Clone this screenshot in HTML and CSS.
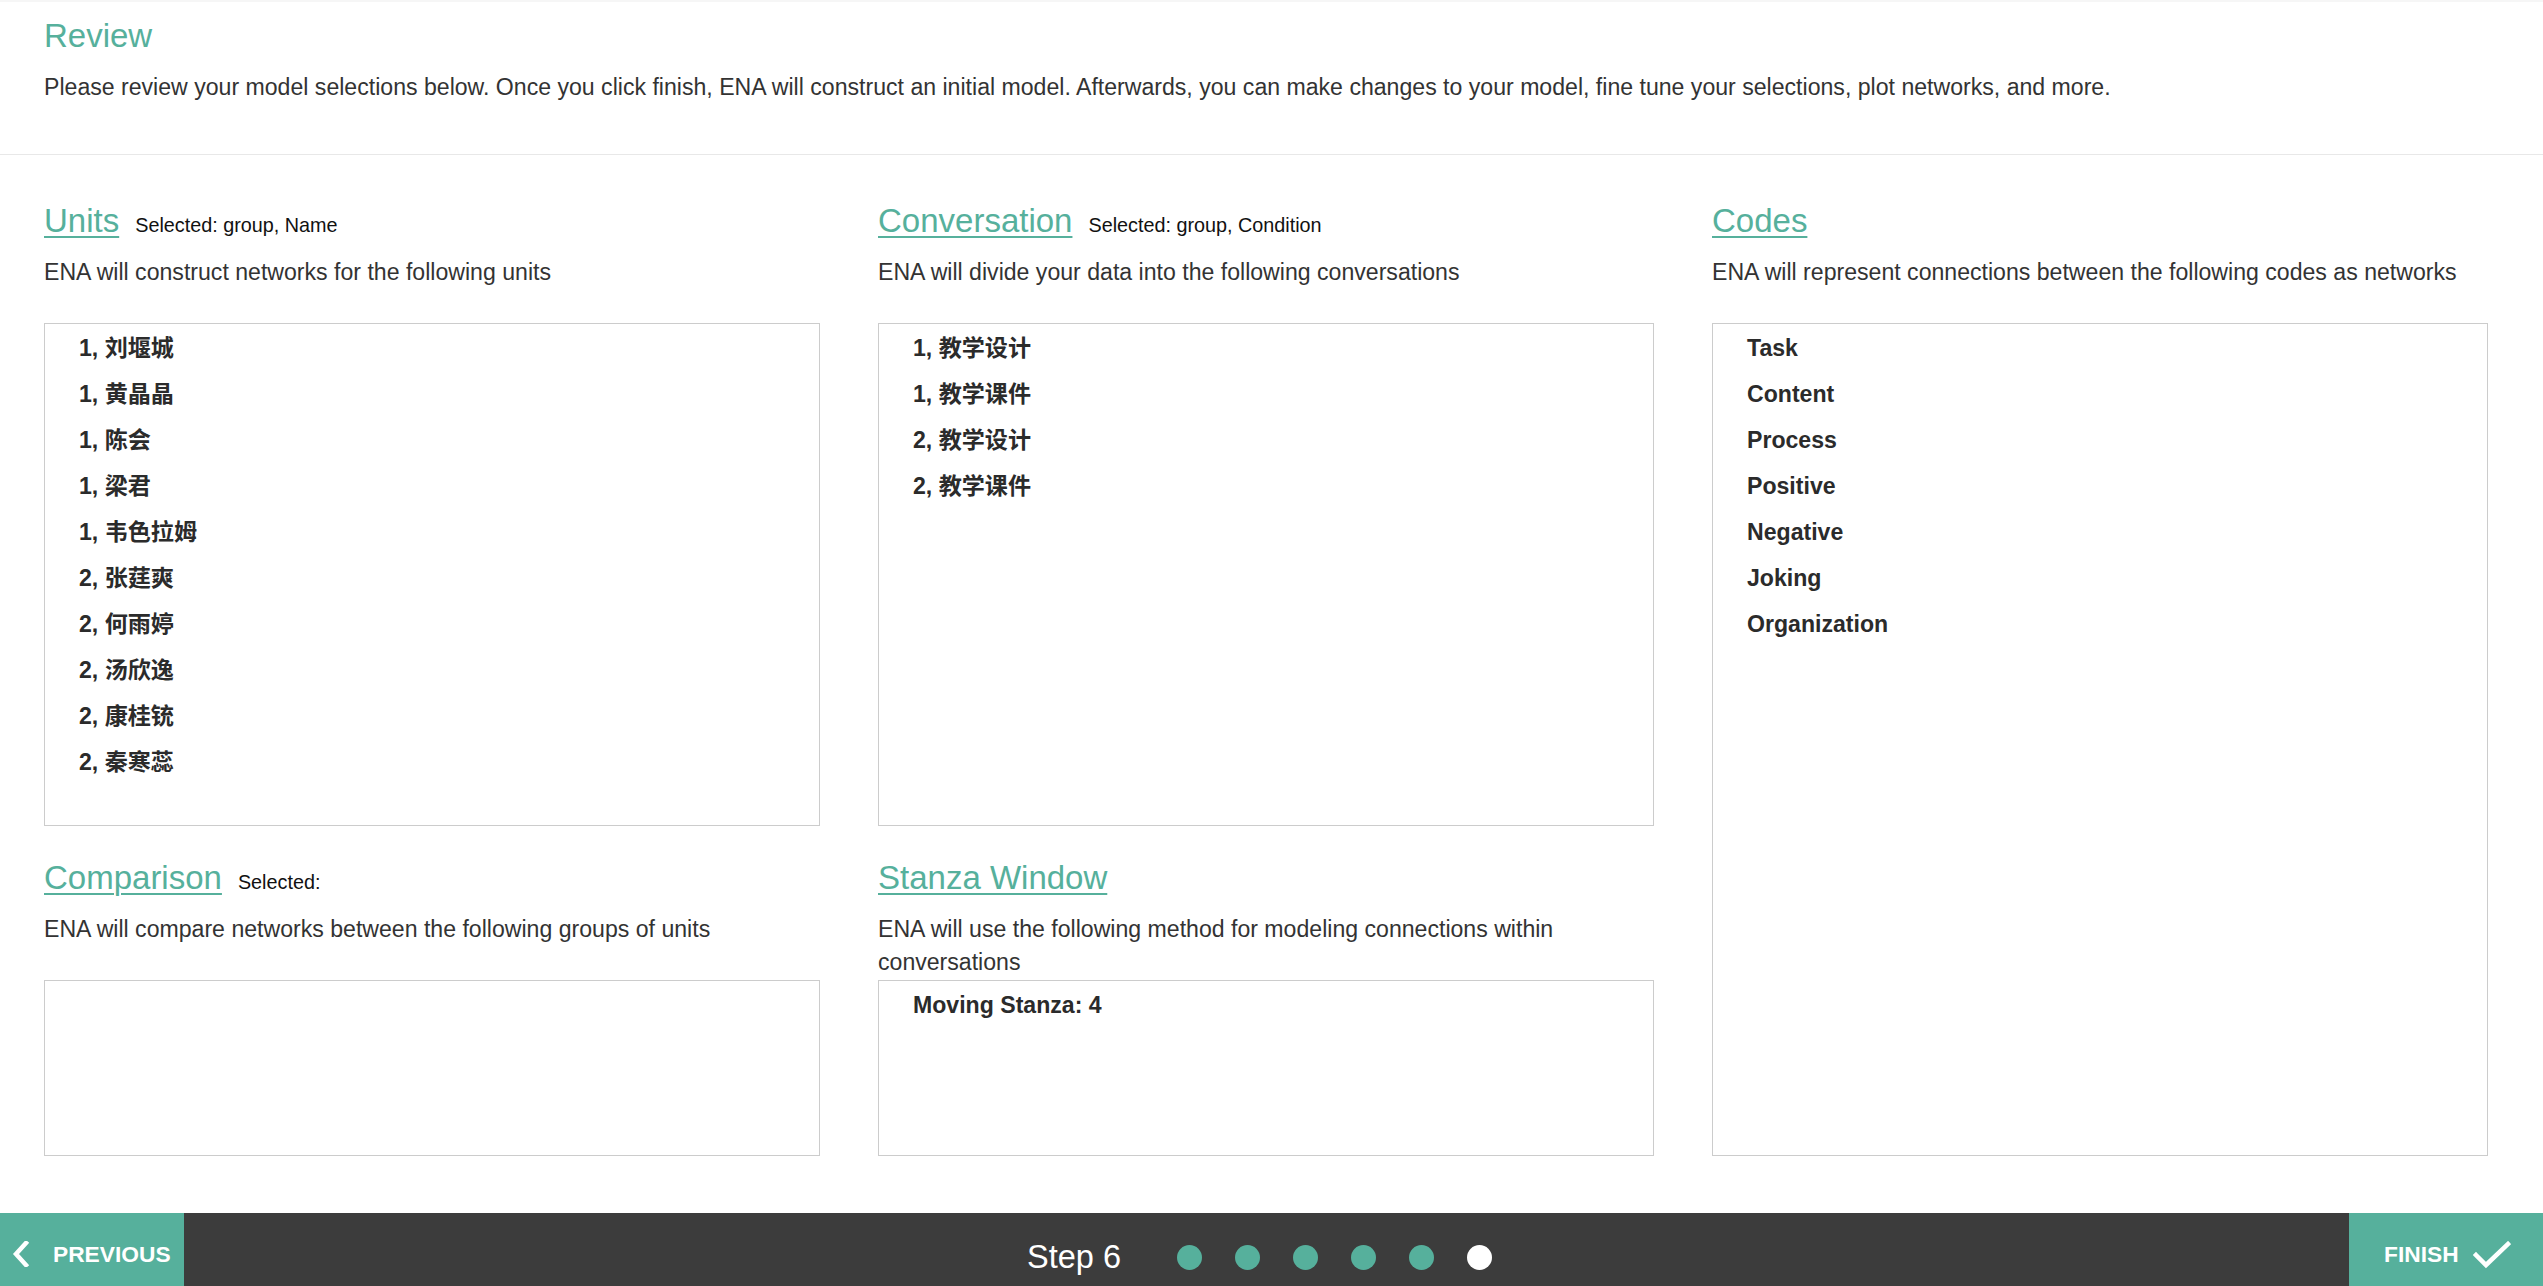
FILE: index.html
```html
<!DOCTYPE html>
<html lang="en">
<head>
<meta charset="utf-8">
<title>Review</title>
<link rel="stylesheet" href="styles.css">
</head>
<body>
<header class="review-header">
  <h2 class="review-title">Review</h2>
  <p class="review-intro">Please review your model selections below. Once you click finish, ENA will construct an initial model. Afterwards, you can make changes to your model, fine tune your selections, plot networks, and more.</p>
</header>

<main class="review-grid">
  <section class="panel">
    <h3 class="panel-title"><a href="#" class="panel-link">Units</a><span class="panel-selected">Selected: group, Name</span></h3>
    <p class="panel-desc">ENA will construct networks for the following units</p>
    <ul class="panel-box box-tall">
      <li>1, 刘堰城</li>
      <li>1, 黄晶晶</li>
      <li>1, 陈会</li>
      <li>1, 梁君</li>
      <li>1, 韦色拉姆</li>
      <li>2, 张莛爽</li>
      <li>2, 何雨婷</li>
      <li>2, 汤欣逸</li>
      <li>2, 康桂铳</li>
      <li>2, 秦寒蕊</li>
    </ul>
  </section>

  <section class="panel">
    <h3 class="panel-title"><a href="#" class="panel-link">Conversation</a><span class="panel-selected">Selected: group, Condition</span></h3>
    <p class="panel-desc">ENA will divide your data into the following conversations</p>
    <ul class="panel-box box-tall">
      <li>1, 教学设计</li>
      <li>1, 教学课件</li>
      <li>2, 教学设计</li>
      <li>2, 教学课件</li>
    </ul>
  </section>

  <section class="panel panel-span">
    <h3 class="panel-title"><a href="#" class="panel-link">Codes</a></h3>
    <p class="panel-desc">ENA will represent connections between the following codes as networks</p>
    <ul class="panel-box box-fill">
      <li>Task</li>
      <li>Content</li>
      <li>Process</li>
      <li>Positive</li>
      <li>Negative</li>
      <li>Joking</li>
      <li>Organization</li>
    </ul>
  </section>

  <section class="panel">
    <h3 class="panel-title"><a href="#" class="panel-link">Comparison</a><span class="panel-selected">Selected:</span></h3>
    <p class="panel-desc">ENA will compare networks between the following groups of units</p>
    <ul class="panel-box box-short"></ul>
  </section>

  <section class="panel">
    <h3 class="panel-title"><a href="#" class="panel-link">Stanza Window</a></h3>
    <p class="panel-desc">ENA will use the following method for modeling connections within conversations</p>
    <ul class="panel-box box-short">
      <li>Moving Stanza: 4</li>
    </ul>
  </section>
</main>

<footer class="wizard-bar">
  <a href="#" class="wizard-btn btn-prev">
    <svg class="icon-chevron" width="18" height="26" viewBox="0 0 18 26" aria-hidden="true"><path d="M14 2 L4 13 L14 24" fill="none" stroke="#ffffff" stroke-width="4.5" stroke-linecap="square"/></svg>
    <span>PREVIOUS</span>
  </a>
  <div class="wizard-steps">
    <span class="step-label">Step 6</span>
    <span class="dots">
      <span class="dot"></span>
      <span class="dot"></span>
      <span class="dot"></span>
      <span class="dot"></span>
      <span class="dot"></span>
      <span class="dot dot-current"></span>
    </span>
  </div>
  <a href="#" class="wizard-btn btn-finish">
    <span>FINISH</span>
    <svg class="icon-check" width="38" height="29" viewBox="0 0 38 29" aria-hidden="true"><path d="M3 14 L13 24 L35 3" fill="none" stroke="#ffffff" stroke-width="4.5" stroke-linecap="square"/></svg>
  </a>
</footer>
</body>
</html>
```

FILE: styles.css
```css
html, body {
  margin: 0;
  padding: 0;
  overflow: hidden;
}

body {
  font-family: "Liberation Sans", Arial, "Noto Sans CJK SC", sans-serif;
  font-size: 23.1px;
  line-height: 33px;
  color: #333333;
  background: #ffffff;
}

.review-header {
  padding: 16px 44px 50px;
  border-top: 2px solid #f6f6f6;
  border-bottom: 1px solid #e8e8e8;
}

.review-title {
  margin: 0 0 17px;
  font-size: 33px;
  line-height: 36px;
  font-weight: normal;
  color: #56b09c;
}

.review-intro {
  margin: 0;
}

.review-grid {
  display: grid;
  grid-template-columns: 776px 776px 776px;
  column-gap: 58px;
  row-gap: 34px;
  padding: 48px 44px 0;
}

.panel {
  display: flex;
  flex-direction: column;
  min-width: 0;
}

.panel-span {
  grid-column: 3;
  grid-row: 1 / span 2;
}

.panel-title {
  margin: 0 0 17px;
  font-size: 33px;
  line-height: 36px;
  height: 36px;
  font-weight: normal;
}

.panel-link {
  color: #56b09c;
  text-decoration: underline;
  text-decoration-thickness: 2px;
  text-underline-offset: 4px;
}

.panel-selected {
  margin-left: 16px;
  font-size: 19.8px;
  line-height: 20px;
  color: #111111;
}

.panel-desc {
  margin: 0;
  min-height: 67px;
}

.panel-box {
  list-style: none;
  margin: 0;
  padding: 1px 20px 0 34px;
  border: 1px solid #cccccc;
  box-sizing: border-box;
}

.panel-box li {
  font-weight: bold;
  line-height: 46px;
  color: #2b2b2b;
}

.box-tall {
  height: 503px;
}

.box-short {
  height: 176px;
}

.box-fill {
  flex: 1;
}

.wizard-bar {
  display: flex;
  align-items: stretch;
  height: 88px;
  margin-top: 57px;
  background: #3c3c3c;
}

.wizard-btn {
  display: flex;
  align-items: center;
  box-sizing: border-box;
  padding-bottom: 6px;
  background: #56b09c;
  color: #ffffff;
  font-weight: bold;
  font-size: 22.75px;
  text-decoration: none;
}

.btn-prev {
  width: 184px;
  padding-left: 12px;
  gap: 23px;
}

.btn-finish {
  width: 194px;
  padding-left: 35px;
  gap: 14px;
}

.icon-check {
  margin-top: 2px;
}

.wizard-steps {
  flex: 1;
  display: flex;
  align-items: center;
  justify-content: center;
  padding-right: 14px;
  color: #ffffff;
}

.step-label {
  font-size: 32.5px;
  line-height: 36px;
}

.dots {
  display: flex;
  gap: 33px;
  margin-left: 56px;
}

.dot {
  width: 25px;
  height: 25px;
  border-radius: 50%;
  background: #56b09c;
}

.dot-current {
  background: #ffffff;
}
```
